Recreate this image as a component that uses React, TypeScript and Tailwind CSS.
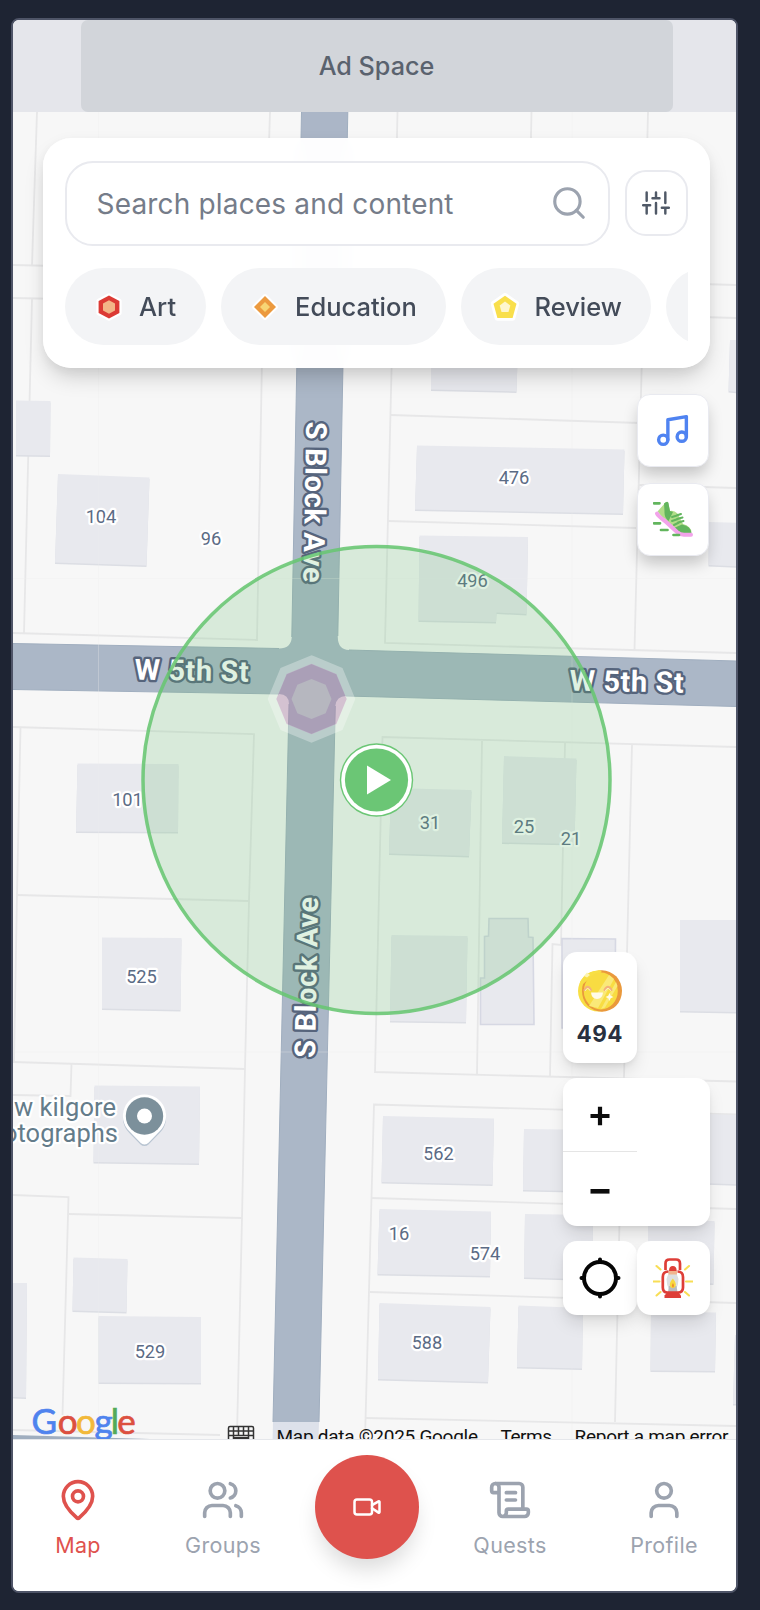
import React from "react";
import { MapPin, Users, ScrollText, User, Video, Search } from "lucide-react";

const parcelLines = [
  "37,112 32,265",
  "13,265 270,271",
  "13,298 263,303",
  "32,299 24,633",
  "270,112 265,270",
  "263,303 257,640 13,633",
  "397.5,112 394,275 736,285",
  "531.5,112 528,279",
  "648,112 644,282",
  "393,308 736,318",
  "393,308 385,643 736,653",
  "391,415 640,423",
  "388,521 636,528",
  "643,315 634.5,650",
  "638,485 736,488",
  "13,727 254,734 249,901 245,1068 242,1218 237,1435",
  "20.5,728 17,895 14,1062",
  "17,895 249,901",
  "13,1062 245,1069",
  "71.5,1064 70.5,1096 13,1095",
  "13,1195 68.5,1197 62.5,1415",
  "68.5,1214 242,1218",
  "13,1430 220,1435",
  "736,747 382.5,737 375,1072 736,1081.5",
  "482,741 477,1074",
  "565,743 561,945 552.5,944 550,1076",
  "632,745 624,1078",
  "736,1114.5 374,1104.5 365,1439",
  "371,1198 736,1209",
  "370,1292 736,1303",
  "366,1418 736,1426",
  "622,1110 615,1422",
];

const buildings = [
  "16,400.5 50.5,401 50,455.5 16,455",
  "58,474 149.5,477.5 146.5,565.5 55,562.5",
  "431,340 518,340 516.5,391.5 431,389.5",
  "417,445.5 624.5,449.5 623,513.5 415,509.5",
  "419.5,535.5 528,537 526.5,614 496.5,612.5 496,622 418.5,620.5",
  "730,340 740,340 740,392 728.5,391",
  "709,522 740,523 740,566.5 708.5,565",
  "391,788 471.5,790 469,856 389,853.5",
  "504,756 576.5,758.5 574.5,844 502,842.5",
  "391.5,935 467.5,936 466,1022 390,1021",
  "680,920 740,920 740,1012 680,1011",
  "77.5,763.5 178.5,764 178,832 76,831.5",
  "102,937.5 181.5,938 180.5,1010 102,1008.5",
  "94.5,1085.5 200,1086.5 199,1163.5 93.5,1162",
  "73.5,1257.5 127.5,1259 126.5,1312 72.5,1310.5",
  "98.5,1316 201,1317 201,1383 98.5,1382.5",
  "10,1283 27,1283 26,1397.5 10,1397",
  "383,1116 494,1118.5 492.5,1184.5 381.5,1182",
  "524,1129 600,1130 600,1191.5 523,1190",
  "379.5,1209 491,1211.5 490,1276 377.5,1274",
  "525,1214 593,1215 592,1279.5 524,1277.5",
  "379.5,1303 490.5,1307 488,1382 378,1379",
  "518.5,1305.5 583,1308 582,1368.5 517,1367",
  "700,1114 740,1115 740,1184.5 700,1183",
  "648,1220 714.5,1221 713.5,1283.5 648,1282",
  "651,1312 716,1312.5 715,1371 650.5,1370.5",
  "735,1335 740,1335 740,1404 733,1404",
];

const outlinedBuildings = [
  "489,918.5 528,918.5 528.5,937 533,937.5 534,1024.5 480.5,1024.5 480.5,978 484.5,978 484.5,936.5 488.5,936",
  "562,938.5 615.5,939 615,1028 562,1028",
];

const houseNumbers: [string, number, number][] = [
  ["104", 101, 523],
  ["96", 211, 545],
  ["476", 514, 484],
  ["496", 472.5, 587],
  ["101", 127.5, 806],
  ["31", 430, 829],
  ["25", 524, 833],
  ["21", 571, 845],
  ["525", 141.5, 983],
  ["562", 438.5, 1159.5],
  ["16", 399, 1240],
  ["574", 485, 1260],
  ["588", 427, 1349],
  ["529", 150, 1358],
];

function octagon(cx: number, cy: number, r: number) {
  return Array.from({ length: 8 }, (_, i) => {
    const a = (i * Math.PI) / 4;
    return `${(cx + r * Math.sin(a)).toFixed(2)},${(cy - r * Math.cos(a)).toFixed(2)}`;
  }).join(" ");
}

function StreetLabel({ x, y, angle, length, children }: { x: number; y: number; angle: number; length: number; children: string }) {
  return (
    <text
      transform={`translate(${x} ${y}) rotate(${angle})`}
      textLength={length}
      fontSize="29"
      fill="#ffffff"
      stroke="#56647c"
      strokeWidth="4.8"
      strokeLinejoin="round"
      className="font-['Roboto',sans-serif] font-bold [paint-order:stroke]"
    >
      {children}
    </text>
  );
}

function MapCanvas() {
  return (
    <svg viewBox="13 112 723 1327" className="absolute inset-0 h-full w-full">
      <rect x="13" y="112" width="723" height="1327" fill="#f7f7f7" />
      <g fill="none" stroke="#e7e7e8" strokeWidth="1.8">
        {parcelLines.map((p) => (
          <polyline key={p} points={p} />
        ))}
      </g>
      <g fill="#dcdee4" transform="translate(0 1.5)">
        {buildings.map((p) => (
          <polygon key={p} points={p} />
        ))}
      </g>
      <g fill="#e8e9ee">
        {buildings.map((p) => (
          <polygon key={p} points={p} />
        ))}
      </g>
      <g fill="#e8e9ee" stroke="#d6d8e3" strokeWidth="1.6">
        {outlinedBuildings.map((p) => (
          <polygon key={p} points={p} />
        ))}
      </g>
      <path
        d="M301.5 112H347.8L337.8 636Q337.5 649.5 349 650L736 661V706.5L346 696Q336.500 696 335.3 706L319 1422H273L289 704Q289 694.5 279 694L13 689.5V643.5L279 648.5Q291 648.5 291.8 637Z"
        fill="#abb7c7"
      />
      <path d="M301.5 112L291.8 637M289 704L273 1422M347.8 112L337.8 636M335.3 706L319 1422M13 643.5L279 648.5M13 689.5L279 694M349 650L736 661M346 696L736 706.5" fill="none" stroke="#a0aebf" strokeWidth="1" />
      <path d="M13 1435L150 1439H13Z" fill="#a0aebf" />
      <path d="M273 1422H319L318.5 1439H272.6Z" fill="#dde1ea" />
      <path d="M98.5 112V1439M572 112V1439M13 578.5H736M13 1052H736" stroke="#eeeeee" strokeWidth="1" opacity=".3" />

      <StreetLabel x={306.3} y={421.5} angle={91.1} length={161}>S Block Ave</StreetLabel>
      <StreetLabel x={315} y={1058} angle={-88.9} length={161}>S Block Ave</StreetLabel>
      <StreetLabel x={134.5} y={679.4} angle={1.1} length={114}>W 5th St</StreetLabel>
      <StreetLabel x={569.5} y={690.4} angle={1.1} length={114}>W 5th St</StreetLabel>

      <g fontSize="18.3" textAnchor="middle" fill="#5b6b85" stroke="#ffffff" strokeWidth="4.5" strokeLinejoin="round" className="font-['Roboto',sans-serif] [paint-order:stroke]">
        {houseNumbers.map(([n, x, y]) => (
          <text key={n} x={x} y={y} textLength={n.length * 10.2}>{n}</text>
        ))}
      </g>

      <g fontSize="25.5" textAnchor="end" fill="#647c8a" stroke="#ffffff" strokeWidth="4.5" strokeLinejoin="round" className="font-['Roboto',sans-serif] [paint-order:stroke]">
        <text x="116" y="1115.5" textLength="102">w kilgore</text>
        <text x="118" y="1141.5" textLength="115">otographs</text>
      </g>
      <path d="M144.5 1095a21.5 21.5 0 0 1 15.4 36.6l-11.4 11.6a5.6 5.6 0 0 1-8 0l-11.4-11.6A21.5 21.5 0 0 1 144.5 1095z" fill="#b9c5d2" transform="translate(0 1.2)" />
      <path d="M144.5 1094.5a21.5 21.5 0 0 1 15.4 36.6l-11.4 11.6a5.6 5.6 0 0 1-8 0l-11.4-11.6A21.5 21.5 0 0 1 144.5 1094.5z" fill="#fff" />
      <circle cx="144.5" cy="1116" r="18.7" fill="#7c909b" />
      <circle cx="144.5" cy="1116" r="7.5" fill="#fff" />

      <circle cx="376.5" cy="780" r="233.5" fill="#68be72" fillOpacity=".21" stroke="#68c672" strokeOpacity=".88" strokeWidth="3.5" />

      <polygon points={octagon(311.5, 699, 39.4)} fill="none" stroke="#fff" strokeOpacity=".3" strokeWidth="8.2" />
      <polygon points={octagon(311.5, 699, 35.2)} fill="#cb66be" fillOpacity=".3" />
      <polygon points={octagon(311.5, 699, 20)} fill="#b6b7bf" />

      <circle cx="376.5" cy="780" r="36.7" fill="#6bc675" />
      <circle cx="376.5" cy="780" r="35.3" fill="#fff" />
      <circle cx="376.5" cy="780" r="31.6" fill="#6bc675" />
      <path d="M367 765.5L391 780L367 794.5Z" fill="#fff" />

      <text y="1433.5" fontSize="35" strokeWidth=".7" className="font-['Lato',sans-serif]">
        <tspan x="31.5" fill="#4f83ee" stroke="#4f83ee">G</tspan>
        <tspan x="57.8" fill="#dc5040" stroke="#dc5040">o</tspan>
        <tspan x="76" fill="#f2b93a" stroke="#f2b93a">o</tspan>
        <tspan x="94.5" fill="#4f83ee" stroke="#4f83ee">g</tspan>
        <tspan x="110.8" fill="#54ab58" stroke="#54ab58">l</tspan>
        <tspan x="117.300" fill="#dc5040" stroke="#dc5040">e</tspan>
      </text>
      <path d="M230 1426.5H252Q253.5 1426.5 253.5 1428V1440H228.5V1428Q228.5 1426.5 230 1426.5ZM228.5 1431H253.5M228.5 1435.5H253.5M233.5 1426.5V1435.5M238.5 1426.5V1435.5M243.5 1426.5V1435.5M248.5 1426.5V1435.5M233.5 1435.5V1440M248.5 1435.5V1440" fill="none" stroke="#333" strokeWidth="1.5" />
      <path d="M234 1437H248V1440H234Z" fill="#333" />
      <g fontSize="19" fill="#111" className="font-['Roboto',sans-serif]">
        <text x="276.5" y="1442.5" textLength="201.5">Map data ©2025 Google</text>
        <text x="500.5" y="1442.5" textLength="51.5">Terms</text>
        <text x="574.5" y="1442.5" textLength="154">Report a map error</text>
      </g>
    </svg>
  );
}

function HexIcon() {
  return (
    <svg viewBox="-14 -14 28 28" className="size-7" strokeLinejoin="round">
      <path d="M0-11.5L10.4-6V6L0 11.5L-10.4 6V-6Z" fill="#dc3a34" stroke="#fff" strokeWidth="4.5" className="[paint-order:stroke]" />
      <path d="M0-6.8L6-3.5V3.5L0 6.8L-6 3.5V-3.5Z" fill="#f3b587" />
    </svg>
  );
}

function DiamondIcon() {
  return (
    <svg viewBox="-14 -14 28 28" className="size-7" strokeLinejoin="round">
      <path d="M0-11L11 0L0 11L-11 0Z" fill="#ec9a3f" stroke="#fff" strokeWidth="4" className="[paint-order:stroke]" />
      <path d="M0-5L5 0L0 5L-5 0Z" fill="#f7d574" />
    </svg>
  );
}

function PentagonIcon() {
  return (
    <svg viewBox="-14 -14 28 28" className="size-7" strokeLinejoin="round">
      <path d="M0-11.3L11.5-3.3L7.6 11H-7.6L-11.5-3.3Z" fill="#f9df4c" stroke="#fff" strokeWidth="5.5" className="[paint-order:stroke]" />
      <path d="M0-5.5L5.3-1.5L3.5 5H-3.5L-5.3-1.5Z" fill="#fef6cf" />
    </svg>
  );
}

function Chip({ icon, label, className }: { icon: React.ReactNode; label: string; className: string }) {
  return (
    <div className={`flex h-[77px] shrink-0 items-center rounded-full bg-[#f3f4f6] pl-[30px] text-[25.5px] font-medium text-[#434b59] ${className}`}>
      {icon}
      <span className="ml-[16px] pt-px">{label}</span>
    </div>
  );
}

function SearchPanel() {
  return (
    <div className="absolute top-[26px] left-[30px] h-[230px] w-[667px] rounded-[28px] bg-white/[.97] px-[22px] pt-[22.5px] shadow-[0_12px_22px_-4px_rgba(0,0,0,.18),0_3px_14px_rgba(0,0,0,.05)] backdrop-blur-md">
      <div className="flex items-center gap-[15px]">
        <div className="flex h-[85px] w-[545px] shrink-0 items-center justify-between rounded-[28px] border-2 border-[#e9eaef] bg-white pr-[20.5px] pl-[29.5px]">
          <span className="pt-px text-[28px] tracking-[.17px] whitespace-nowrap text-[#757c89]">Search places and content</span>
          <Search className="size-[38px] text-[#9ca3af]" strokeWidth={2} />
        </div>
        <div className="flex h-[66px] w-[62.5px] shrink-0 items-center justify-center rounded-[21px] border-2 border-[#e9eaef] bg-white">
          <svg viewBox="0 0 24 24" className="size-7 text-[#505967]" fill="none" stroke="currentColor" strokeWidth="2.1" strokeLinecap="round">
            <path d="M4 21v-7M4 10V3M12 21v-9M12 8V3M20 21v-5M20 12V3M1 14h6M9 8h6M17 16h6" />
          </svg>
        </div>
      </div>
      <div className="mt-[22.5px] flex gap-[15px] overflow-hidden">
        <Chip icon={<HexIcon />} label="Art" className="w-[141px]" />
        <Chip icon={<DiamondIcon />} label="Education" className="w-[224.5px]" />
        <Chip icon={<PentagonIcon />} label="Review" className="w-[190px]" />
        <div className="h-[77px] w-[120px] shrink-0 rounded-full bg-[#f3f4f6]" />
      </div>
    </div>
  );
}

function MusicIcon() {
  return (
    <svg viewBox="0 0 24 24" className="size-[37px] text-[#4f83f1]" fill="none" stroke="currentColor" strokeWidth="2.2" strokeLinecap="round" strokeLinejoin="round">
      <path d="M9 18V5l12-2v13" />
      <circle cx="6" cy="18" r="3" />
      <circle cx="18" cy="16" r="3" />
    </svg>
  );
}

function ShoeIcon() {
  return (
    <svg viewBox="0 0 40 38" className="h-[38px] w-10" fill="none">
      <path d="M4.5 10.5L12.5 1.5Q15 .5 15.5 3.5L17 10Q21 9 24.5 12.5L30 23Q38 25 38.5 31.5L30 33.5L16 24Z" fill="#b1dd88" />
      <path d="M11 2.500Q15.5-1.5 15.8 4L17 10L20 11L15.5 20Q11 17 11.5 10Z" fill="#62b55d" />
      <path d="M21 27L29 23.5Q38 25 38.5 32.5H29Z" fill="#62b55d" />
      <path d="M23.5 14.5L28 13M24 18L29.5 16.5M25 21.5L30.5 20M19 16L24 14.5M19 20L25 18M21 24L26 21.5" stroke="#62b55d" strokeWidth="2" strokeLinecap="round" />
      <path d="M4 12.5Q5 15 12 20L24 31Q27 33.6 31 33.8L38 33.7" stroke="#f2a3ea" strokeWidth="4" strokeLinecap="round" />
      <path d="M1 2.3H6.5M1 22.3H7M8 29H14.5M20.5 34H26" stroke="#62b55d" strokeWidth="2.7" strokeLinecap="round" />
    </svg>
  );
}

function CoinIcon() {
  return (
    <svg viewBox="0 0 44 42" className="h-[42px] w-11" fill="none">
      <circle cx="20.5" cy="21" r="20.5" fill="#f8df45" />
      <path d="M24 .3A20 20.7 0 0 1 24 41.7Q16 41.5 10 36Q4 30 4 21T10 6Q16 .5 24 .3Z" fill="#ea993c" />
      <path d="M2 12Q8 1 22 .2L24 2L12 8L5 14Z" fill="#f8df45" />
      <ellipse cx="22.8" cy="21" rx="17" ry="18.5" fill="#f8dc42" />
      <path d="M31 5L36 9L20 38L11 36Z" fill="#fae978" />
      <path d="M38 12L39.5 16L27 37.5L23 39Z" fill="#fae978" />
      <path d="M6.500 20Q9.5 13.5 13 20M26.5 20Q30 13.5 33.5 20" stroke="#f3b07c" strokeWidth="2" strokeLinecap="round" />
      <path d="M7.5 20.5Q9.5 16 12 20.5M27.5 20.5Q30 16 32.5 20.5" stroke="#fdf0c4" strokeWidth="1" strokeLinecap="round" />
      <path d="M13 22.5H25Q24.5 29 19 29T13 22.5Z" fill="#fffbe8" />
      <path d="M31.5 23L32.7 25.8L35.5 27L32.7 28.2L31.5 31L30.3 28.2L27.5 27L30.3 25.8Z" fill="#fffbe8" />
      <path d="M6 6L9 2.5L12 5L9 7.5Z" fill="#fdf4b0" />
    </svg>
  );
}

function LanternIcon() {
  return (
    <svg viewBox="0 0 40 40" className="size-10" fill="none">
      <path d="M3.5 8L7.5 11.5M36 8L32 11.5M.5 23.5H6.5M33 23.5H39.5M3.5 37.5L7.5 34M36 37.5L32 34" stroke="#f8de55" strokeWidth="2.1" strokeLinecap="round" />
      <path d="M16 14H23L25.5 21Q25.5 27 23 31H16Q13.5 27 13.5 21Z" fill="#dcdfe1" />
      <path d="M15.5 13H24V16.5H15.5Z" fill="#f0b48e" />
      <path d="M16 28H23.5L24.5 34H15Z" fill="#b8bcc0" />
      <path d="M19.8 20.5Q23.8 25 22.5 28.5Q20 31.5 17 28.5Q16 25 19.8 20.5Z" fill="#f8d83e" />
      <path d="M20 25Q22 28 20 29.7Q17.8 28 20 25Z" fill="#ee9030" />
      <path d="M12.5 12V5.5Q12.5 1.5 16.5 1.5H23Q27 1.5 27 5.5V12" stroke="#de3e38" strokeWidth="2.7" />
      <path d="M16 13Q16 8 19.8 8T23.7 13Z" fill="#de3e38" />
      <path d="M15.5 13.5Q9.8 13.5 9.8 19V29.5Q9.8 34.5 14.5 34.5H25Q30 34.5 30 29.5V19Q30 13.5 24.5 13.5" stroke="#de3e38" strokeWidth="2.7" />
      <path d="M14.5 34H25L28 37.5V40H11.5V37.5Z" fill="#de3e38" />
    </svg>
  );
}

const cardShadow = "bg-white shadow-[0_10px_18px_-3px_rgba(0,0,0,.13),0_3px_7px_-3px_rgba(0,0,0,.12)]";

function SideButton({ children }: { children: React.ReactNode }) {
  return (
    <div className="flex h-[73px] w-[72.5px] items-center justify-center rounded-[13px] border border-[#e9eaf0] bg-white shadow-[0_9px_16px_-2px_rgba(0,0,0,.22)]">
      {children}
    </div>
  );
}

function SideButtons() {
  return (
    <div className="absolute top-[282px] right-[27px] flex flex-col gap-4">
      <SideButton>
        <MusicIcon />
      </SideButton>
      <SideButton>
        <ShoeIcon />
      </SideButton>
    </div>
  );
}

function MapControls() {
  return (
    <div className="absolute top-[840px] left-[549.5px] flex w-[147.5px] flex-col gap-[15px]">
      <div className={`flex h-[111px] w-[74.5px] flex-col items-center rounded-[14px] pt-[18px] ${cardShadow}`}>
        <CoinIcon />
        <span className="mt-[6px] text-[22.5px] leading-8 font-bold tracking-[.5px] text-[#283040]">494</span>
      </div>
      <div className={`h-[148px] rounded-[14px] ${cardShadow}`}>
        <div className="flex h-[73.5px] w-[74px] items-center justify-center border-b-[1.5px] border-[#e5e5e5] pt-[4px]">
          <svg viewBox="0 0 20 20" className="size-5" stroke="#0c0c0c" strokeWidth="4.2">
            <path d="M.5 10H19.5M10 .8V19.2" />
          </svg>
        </div>
        <div className="flex h-[74px] w-[74px] items-center justify-center">
          <svg viewBox="0 0 20 20" className="size-5" stroke="#0c0c0c" strokeWidth="4.6">
            <path d="M.5 12.3H19.5" />
          </svg>
        </div>
      </div>
      <div className="flex">
        <div className={`flex h-[74px] w-[74px] items-center justify-center rounded-[14px] ${cardShadow}`}>
          <svg viewBox="-21 -21 42 42" className="size-[42px]" fill="none" stroke="#050505" strokeLinecap="round">
            <circle r="16" strokeWidth="4" />
            <path d="M0-18.5V-16M0 18.5V16M-18.5 0H-16M18.5 0H16" strokeWidth="4" />
          </svg>
        </div>
        <div className={`flex h-[74px] w-[73.5px] items-center justify-center rounded-[14px] ${cardShadow}`}>
          <LanternIcon />
        </div>
      </div>
    </div>
  );
}

function NavItem({ icon, label, className }: { icon: React.ReactNode; label: string; className: string }) {
  return (
    <div className={`flex flex-col items-center pt-[38px] ${className}`}>
      {icon}
      <span className="mt-[7px] text-[21.5px] leading-8 tracking-[.35px]">{label}</span>
    </div>
  );
}

function BottomNav() {
  return (
    <nav className="grid h-[152px] grid-cols-[130px_160px_129px_156px_148px] border-t-[1.5px] border-[#e5e7eb] bg-white">
      <NavItem icon={<MapPin className="size-11" />} label="Map" className="text-[#df524d]" />
      <NavItem icon={<Users className="size-11" />} label="Groups" className="text-[#9ca3af]" />
      <div className="flex justify-center pt-[15px] pr-[2px]">
        <div className="flex size-[104px] shrink-0 items-center justify-center rounded-full bg-[#de524d] text-white shadow-[0_14px_22px_-4px_rgba(0,0,0,.15)]">
          <Video className="size-[30px]" />
        </div>
      </div>
      <NavItem icon={<ScrollText className="size-11" />} label="Quests" className="text-[#9ca3af]" />
      <NavItem icon={<User className="size-11" />} label="Profile" className="pl-[4px] text-[#9ca3af]" />
    </nav>
  );
}

export default function App() {
  return (
    <div className="h-[1610px] w-[760px] overflow-hidden bg-[#1e2433] pt-[18px] pl-[11px] font-['Inter','Liberation_Sans',sans-serif]">
      <div className="flex h-[1575px] w-[727px] flex-col overflow-hidden rounded-[8px] border-2 border-[#4e5467] bg-white">
        <header className="h-[92px] shrink-0 bg-[#e5e6eb] pr-[63.5px] pl-[67.5px]">
          <div className="flex h-[92px] items-center justify-center rounded-[7px] bg-[#d2d5da] pt-[2px] text-[25.2px] font-medium text-[#5a626e]">
            Ad Space
          </div>
        </header>
        <main className="relative h-[1327px] shrink-0 overflow-hidden">
          <MapCanvas />
          <SearchPanel />
          <SideButtons />
          <MapControls />
        </main>
        <BottomNav />
      </div>
    </div>
  );
}
